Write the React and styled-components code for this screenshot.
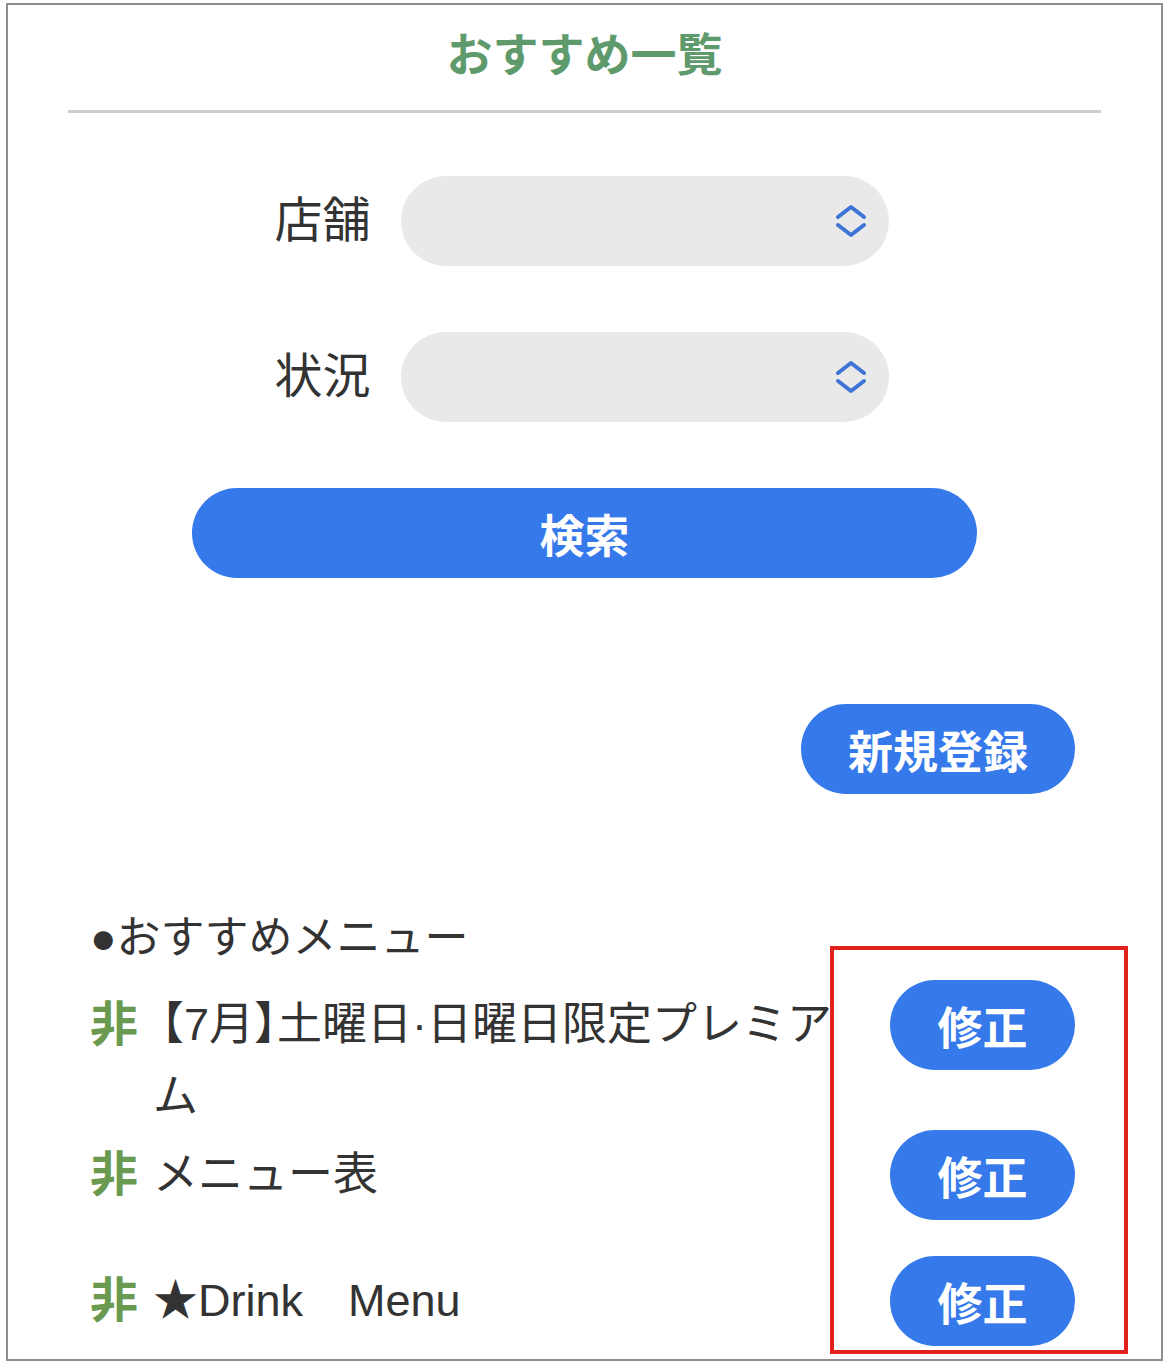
import React from 'react';
import styled, { createGlobalStyle } from 'styled-components';

const GlobalStyle = createGlobalStyle`
  body {
    margin: 0;
    background: #ffffff;
    font-family: "Liberation Sans", "Noto Sans CJK JP", sans-serif;
    color: #333333;
  }
`;

const Frame = styled.div`
  position: relative;
  box-sizing: border-box;
  width: 1157px;
  height: 1358px;
  margin: 3px 0 0 6px;
  border: 2px solid #8e8e8e;
  overflow: hidden;
`;

const Title = styled.h1`
  margin: 0;
  padding-top: 17px;
  font-size: 46px;
  line-height: 66px;
  font-weight: 700;
  text-align: center;
  color: #5f9a6c;
`;

const Rule = styled.hr`
  margin: 22px 60px 0;
  border: none;
  height: 3px;
  background: #cdcdcd;
`;

const SearchForm = styled.div`
  display: flex;
  flex-direction: column;
  align-items: center;
  gap: 66px;
  margin-top: 63px;
`;

const FieldRow = styled.div`
  display: flex;
  align-items: center;
  gap: 30px;
  margin-right: 6px;
`;

const FieldLabel = styled.label`
  font-size: 48px;
  line-height: 60px;
  color: #333333;
`;

const SelectBox = styled.div`
  display: flex;
  align-items: center;
  justify-content: flex-end;
  box-sizing: border-box;
  width: 488px;
  height: 90px;
  padding-right: 21px;
  border-radius: 45px;
  background: #e9e9e9;
`;

const PillButton = styled.button`
  box-sizing: border-box;
  height: 90px;
  width: ${(p) => p.$width}px;
  border: none;
  border-radius: 45px;
  background: #3579eb;
  color: #ffffff;
  font-family: "Liberation Sans", "Noto Sans CJK JP", sans-serif;
  font-size: 45px;
  font-weight: 700;
  padding: 0;
  flex-shrink: 0;
`;

const NewRow = styled.div`
  display: flex;
  justify-content: flex-end;
  margin-top: 126px;
  padding-right: 86px;
`;

const ListSection = styled.section`
  padding: 0 86px 0 82px;
`;

const ListHeading = styled.h2`
  margin: 114px 0 0;
  font-size: 44px;
  line-height: 60px;
  font-weight: 400;
  color: #333333;
`;

const ItemRow = styled.div`
  display: flex;
  align-items: flex-start;
  margin-top: ${(p) => p.$mt}px;
`;

const StatusMark = styled.span`
  font-size: 48px;
  line-height: 72px;
  padding-top: 9px;
  font-weight: 700;
  color: #6a9a50;
  margin-right: 15px;
  flex-shrink: 0;
`;

const ItemText = styled.div`
  flex: 1;
  min-width: 0;
  font-size: 45px;
  line-height: 72px;
  padding-top: 9px;
  margin-right: 45px;
  color: #333333;
`;

/* opening bracket: trim the blank left half of the em box */
const OpenBracket = styled.span`
  margin-left: -14px;
`;

/* closing bracket: trim the blank right half of the em box */
const CloseBracket = styled.span`
  letter-spacing: -22px;
`;

const Highlight = styled.div`
  position: absolute;
  left: 822px;
  top: 941px;
  width: 298px;
  height: 408px;
  box-sizing: border-box;
  border: 4px solid #e1211d;
  pointer-events: none;
`;

const Chevrons = () => (
  <svg width="34" height="38" viewBox="0 0 34 38" fill="none">
    <path
      d="M4 15 L17 5 L30 15 M4 23 L17 33 L30 23"
      stroke="#3d74d6"
      strokeWidth="4"
      strokeLinecap="round"
      strokeLinejoin="round"
    />
  </svg>
);

const items = [
  {
    key: 'premium',
    text: (
      <>
        <OpenBracket>【</OpenBracket>7月<CloseBracket>】</CloseBracket>
        土曜日·日曜日限定プレミアム
      </>
    ),
    mt: 12,
  },
  { key: 'menu', text: 'メニュー表', mt: -3 },
  { key: 'drink', text: '★Drink\u3000Menu', mt: 36 },
];

const App = () => {
  return (
    <>
      <GlobalStyle />
      <Frame>
        <Title>おすすめ一覧</Title>
        <Rule />
        <SearchForm>
          <FieldRow>
            <FieldLabel>店舗</FieldLabel>
            <SelectBox>
              <Chevrons />
            </SelectBox>
          </FieldRow>
          <FieldRow>
            <FieldLabel>状況</FieldLabel>
            <SelectBox>
              <Chevrons />
            </SelectBox>
          </FieldRow>
          <PillButton $width={785}>検索</PillButton>
        </SearchForm>
        <NewRow>
          <PillButton $width={274}>新規登録</PillButton>
        </NewRow>
        <ListSection>
          <ListHeading>●おすすめメニュー</ListHeading>
          {items.map((item) => (
            <ItemRow key={item.key} $mt={item.mt}>
              <StatusMark>非</StatusMark>
              <ItemText>{item.text}</ItemText>
              <PillButton $width={185}>修正</PillButton>
            </ItemRow>
          ))}
        </ListSection>
        <Highlight />
      </Frame>
    </>
  );
};

export default App;
